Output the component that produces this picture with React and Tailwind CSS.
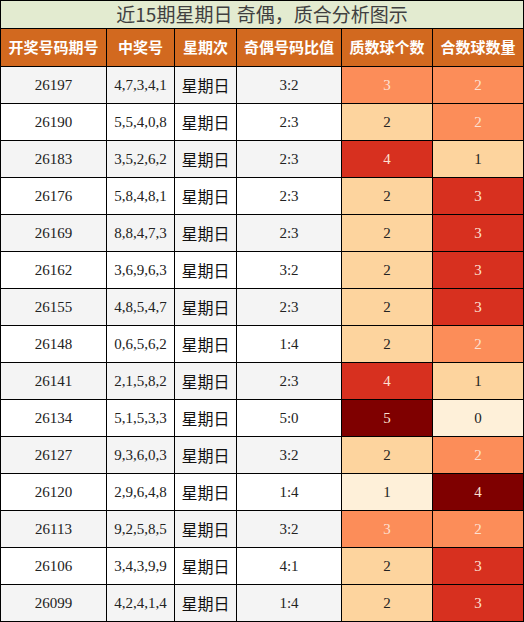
import React from "react";

const rows = [
  ["26197", "4,7,3,4,1", "3:2", 3, 2],
  ["26190", "5,5,4,0,8", "2:3", 2, 2],
  ["26183", "3,5,2,6,2", "2:3", 4, 1],
  ["26176", "5,8,4,8,1", "2:3", 2, 3],
  ["26169", "8,8,4,7,3", "2:3", 2, 3],
  ["26162", "3,6,9,6,3", "3:2", 2, 3],
  ["26155", "4,8,5,4,7", "2:3", 2, 3],
  ["26148", "0,6,5,6,2", "1:4", 2, 2],
  ["26141", "2,1,5,8,2", "2:3", 4, 1],
  ["26134", "5,1,5,3,3", "5:0", 5, 0],
  ["26127", "9,3,6,0,3", "3:2", 2, 2],
  ["26120", "2,9,6,4,8", "1:4", 1, 4],
  ["26113", "9,2,5,8,5", "3:2", 3, 2],
  ["26106", "3,4,3,9,9", "4:1", 2, 3],
  ["26099", "4,2,4,1,4", "1:4", 2, 3],
];

// colour scale per count
const primeColor = {
  1: "bg-[#fef0d9] text-[#222]",
  2: "bg-[#fdd49e] text-[#222]",
  3: "bg-[#fc8d59] text-[#fde0d2]",
  4: "bg-[#d7301f] text-[#fde0d2]",
  5: "bg-[#7f0000] text-[#fde0d2]",
};
const compColor = {
  0: "bg-[#fef0d9] text-[#222]",
  1: "bg-[#fdd49e] text-[#222]",
  2: "bg-[#fc8d59] text-[#fde0d2]",
  3: "bg-[#d7301f] text-[#fde0d2]",
  4: "bg-[#7f0000] text-[#fde0d2]",
};

const serif = "font-['Liberation_Serif','Noto_Sans_CJK_SC',serif]";
const sans = "font-['Noto_Sans_CJK_SC','Noto_Sans',sans-serif]";

const headers = ["开奖号码期号", "中奖号", "星期次", "奇偶号码比值", "质数球个数", "合数球数量"];

export default function App() {
  return (
    <div className="w-[524px] h-[622px] bg-white">
      <div className="grid grid-cols-[105px_67px_61px_104px_90px_90px] gap-px bg-black p-px">
        <div
          className={`col-span-6 h-[27px] bg-[#e3ebd0] flex items-center justify-center text-[19px] text-[#404040] ${sans}`}
        >
          近15期星期日 奇偶，质合分析图示
        </div>
        {headers.map((h) => (
          <div
            key={h}
            className={`h-[37px] bg-[#d2691f] flex items-center justify-center text-white font-bold text-[15px] ${sans}`}
          >
            {h}
          </div>
        ))}
        {rows.map((r, i) => {
          const bg = i % 2 === 0 ? "bg-[#f4f4f4]" : "bg-white";
          return (
            <React.Fragment key={r[0]}>
              <div className={`h-[36px] ${bg} flex items-center justify-center text-[15px] text-[#222] ${serif}`}>
                {r[0]}
              </div>
              <div className={`h-[36px] ${bg} flex items-center justify-center text-[15px] text-[#222] ${serif}`}>
                {r[1]}
              </div>
              <div className={`h-[36px] ${bg} flex items-center justify-center text-[16px] text-[#111] ${sans}`}>
                星期日
              </div>
              <div className={`h-[36px] ${bg} flex items-center justify-center text-[15px] text-[#222] ${serif}`}>
                {r[2]}
              </div>
              <div className={`h-[36px] ${primeColor[r[3]]} flex items-center justify-center text-[15px] ${serif}`}>
                {r[3]}
              </div>
              <div className={`h-[36px] ${compColor[r[4]]} flex items-center justify-center text-[15px] ${serif}`}>
                {r[4]}
              </div>
            </React.Fragment>
          );
        })}
      </div>
    </div>
  );
}
